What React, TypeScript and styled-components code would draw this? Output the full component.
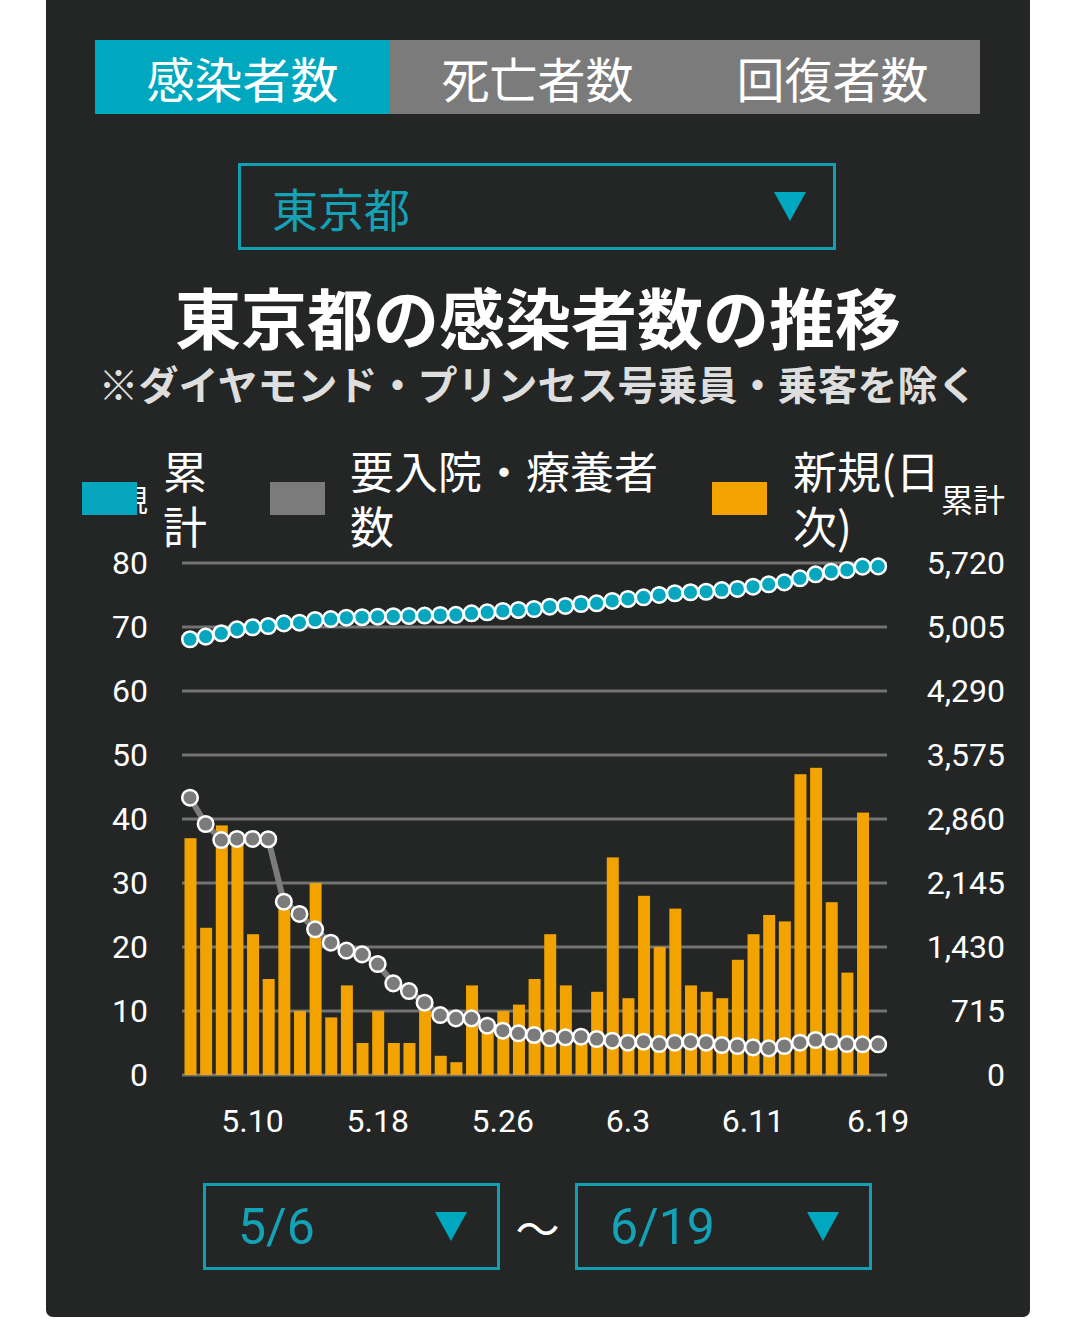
import React from "react";
import styled, {createGlobalStyle} from "styled-components";

const tabs = ["感染者数", "死亡者数", "回復者数"]

// daily new cases (left axis), 5/6 - 6/18
const daily = [37, 23, 39, 36, 22, 15, 28, 10, 30, 9, 14, 5, 10, 5, 5, 11, 3, 2, 14, 8, 10, 11, 15, 22,
    14, 5, 13, 34, 12, 28, 20, 26, 14, 13, 12, 18, 22, 25, 24, 47, 48, 27, 16, 41]

// cumulative (right axis), 5/6 - 6/19
const total = [4868, 4897, 4935, 4979, 5002, 5016, 5046, 5053, 5083, 5094, 5109, 5114, 5120, 5125, 5128,
    5133, 5139, 5141, 5158, 5169, 5184, 5195, 5206, 5232, 5240, 5262, 5270, 5296, 5318, 5337, 5363, 5382,
    5393, 5399, 5418, 5430, 5455, 5482, 5504, 5549, 5594, 5623, 5642, 5679, 5682]

// hospitalized (right axis)
const inpatients = [3098, 2804, 2625, 2637, 2637, 2634, 1936, 1799, 1628, 1478, 1389, 1348, 1240, 1024, 938,
    808, 670, 633, 633, 551, 495, 466, 447, 410, 421, 428, 402, 383, 361, 372, 346, 361, 372, 361, 335, 324,
    309, 298, 324, 361, 391, 372, 346, 343, 343]

const leftTicks = [80, 70, 60, 50, 40, 30, 20, 10, 0]
const rightTicks = ["5,720", "5,005", "4,290", "3,575", "2,860", "2,145", "1,430", "715", "0"]
const xTicks = [{i: 4, t: "5.10"}, {i: 12, t: "5.18"}, {i: 20, t: "5.26"}, {i: 28, t: "6.3"},
    {i: 36, t: "6.11"}, {i: 44, t: "6.19"}]

const X0 = 190
const DX = 15.64
const TOP = 563
const BASE = 1075
const xAt = (i: number) => X0 + i * DX
const yLeft = (v: number) => BASE - v * 6.4
const yRight = (v: number) => BASE - v / 5720 * (BASE - TOP)

const Chart = () => {
    const grayPts = inpatients.map((v, i) => `${xAt(i)},${yRight(v)}`).join(" ")
    const cyanPts = total.map((v, i) => `${xAt(i)},${yRight(v)}`).join(" ")
    return (
        <ChartSvg viewBox="46 540 984 613" width={984} height={613}>
            {leftTicks.map((t, k) =>
                <g key={t}>
                    <line x1={182} x2={887} y1={TOP + k * 64} y2={TOP + k * 64} stroke="#737373" strokeWidth={3}/>
                    <text x={148} y={TOP + k * 64 + 11} textAnchor="end">{t}</text>
                    <text x={1005} y={TOP + k * 64 + 11} textAnchor="end">{rightTicks[k]}</text>
                </g>)}
            {daily.map((v, i) =>
                <rect key={i} x={xAt(i) - 5.5} y={yLeft(v)} width={12} height={BASE - yLeft(v)} fill="#f2a300"/>)}
            <polyline points={grayPts} fill="none" stroke="#7b7b7b" strokeWidth={6}/>
            {inpatients.map((v, i) =>
                <circle key={i} cx={xAt(i)} cy={yRight(v)} r={7.8} fill="#7b7b7b" stroke="#fff" strokeWidth={2.5}/>)}
            <polyline points={cyanPts} fill="none" stroke="#06a6be" strokeWidth={3}/>
            {total.map((v, i) =>
                <circle key={i} cx={xAt(i)} cy={yRight(v)} r={7.8} fill="#06a6be" stroke="#fff" strokeWidth={2.5}/>)}
            {xTicks.map(x =>
                <text key={x.t} x={xAt(x.i)} y={1132} textAnchor="middle">{x.t}</text>)}
        </ChartSvg>
    )
}

export default function App() {
    return (
        <>
            <GlobalStyle/>
            <Panel>
                <Tabs>
                    {tabs.map((t, i) => <Tab key={t} $active={i === 0}>{t}</Tab>)}
                </Tabs>
                <PrefSelect>
                    <span>東京都</span>
                    <Arrow/>
                </PrefSelect>
                <Title>東京都の感染者数の推移</Title>
                <Note>※ダイヤモンド・プリンセス号乗員・乗客を除く</Note>
                <Legend>
                    <Swatch $color="#06a6be"/>
                    <HiddenLabel>新規</HiddenLabel>
                    <LegendLabel $ml={15} $w={44}>累計</LegendLabel>
                    <Swatch $color="#7b7b7b" $ml={63}/>
                    <LegendLabel $ml={25} $w={309}>要入院・療養者数</LegendLabel>
                    <Swatch $color="#f2a300" $ml={53}/>
                    <LegendLabel $ml={26} $w={148}>新規(日次)</LegendLabel>
                    <AxisTitle>累計</AxisTitle>
                </Legend>
                <Chart/>
                <DateRow>
                    <DateSelect>
                        <span>5/6</span>
                        <Arrow/>
                    </DateSelect>
                    <Tilde>～</Tilde>
                    <DateSelect>
                        <span>6/19</span>
                        <Arrow/>
                    </DateSelect>
                </DateRow>
            </Panel>
        </>
    )
}

//styled-components
const GlobalStyle = createGlobalStyle`
  html, body {
    margin: 0;
    background: #fff;
  }
  body {
    font-family: Roboto, "Noto Sans CJK JP", sans-serif;
  }
`
const Panel = styled.div`
  box-sizing: border-box;
  width: 984px;
  margin-left: 46px;
  padding: 40px 0 47px;
  background: #232625;
  border-radius: 0 0 7px 7px;
  display: flex;
  flex-direction: column;
`
const Tabs = styled.div`
  display: grid;
  grid-template-columns: repeat(3, 1fr);
  height: 74px;
  margin: 0 50px 0 49px;
  background: #7b7b7b;
`
const Tab = styled.div<{ $active: boolean }>`
  display: flex;
  align-items: center;
  justify-content: center;
  background: ${p => p.$active ? "#00a8bf" : "#7b7b7b"};
  color: #fff;
  font-family: "Noto Sans CJK JP", sans-serif;
  font-size: 48px;
  line-height: 1;
`
const Arrow = styled.span`
  width: 0;
  height: 0;
  border-left: 16px solid transparent;
  border-right: 16px solid transparent;
  border-top: 29px solid #00a8bf;
`
const PrefSelect = styled.div`
  box-sizing: border-box;
  width: 598px;
  height: 87px;
  margin: 49px 0 0 192px;
  padding: 0 27px 0 31px;
  border: 3px solid #109fb3;
  display: flex;
  align-items: center;
  justify-content: space-between;
  color: #14a2b6;
  font-family: "Noto Sans CJK JP", sans-serif;
  font-size: 46px;
  line-height: 1;
`
const Title = styled.h1`
  margin: 34px 0 0;
  text-align: center;
  color: #fff;
  font-family: "Noto Sans CJK JP", sans-serif;
  font-weight: 700;
  font-size: 66px;
  line-height: 62px;
`
const Note = styled.div`
  margin-top: 17px;
  text-align: center;
  color: #dedede;
  font-family: "Noto Sans CJK JP", sans-serif;
  font-weight: 700;
  font-size: 40px;
  line-height: 40px;
  white-space: nowrap;
`
const Legend = styled.div`
  display: flex;
  align-items: center;
  margin: 40px 27px -13px 36px;
  color: #fff;
  font-family: "Noto Sans CJK JP", sans-serif;
  font-size: 44px;
  line-height: 55px;
`
const Swatch = styled.span<{ $color: string, $ml?: number }>`
  position: relative;
  z-index: 1;
  flex: none;
  width: 55px;
  height: 33px;
  margin-left: ${p => p.$ml || 0}px;
  background: ${p => p.$color};
`
const HiddenLabel = styled.span`
  flex: none;
  margin-left: -49px;
  font-size: 30px;
  line-height: 30px;
  white-space: nowrap;
`
const LegendLabel = styled.span<{ $ml: number, $w: number }>`
  flex: none;
  width: ${p => p.$w}px;
  margin-left: ${p => p.$ml}px;
`
const AxisTitle = styled.span`
  flex: none;
  margin-left: auto;
  font-size: 32px;
  line-height: 1;
`
const ChartSvg = styled.svg`
  display: block;
  text {
    fill: #fff;
    font-family: Roboto, sans-serif;
    font-size: 32px;
  }
`
const DateRow = styled.div`
  display: flex;
  justify-content: center;
  align-items: center;
  margin-top: 30px;
  padding-right: 1px;
`
const DateSelect = styled.div`
  box-sizing: border-box;
  width: 297px;
  height: 87px;
  padding: 0 30px 0 32px;
  border: 3px solid #109fb3;
  display: flex;
  align-items: center;
  justify-content: space-between;
  color: #14a2b6;
  font-family: Roboto, sans-serif;
  font-size: 50px;
  line-height: 1;
`
const Tilde = styled.span`
  width: 75px;
  text-align: center;
  color: #fff;
  font-family: "Noto Sans CJK JP", sans-serif;
  font-size: 44px;
`
